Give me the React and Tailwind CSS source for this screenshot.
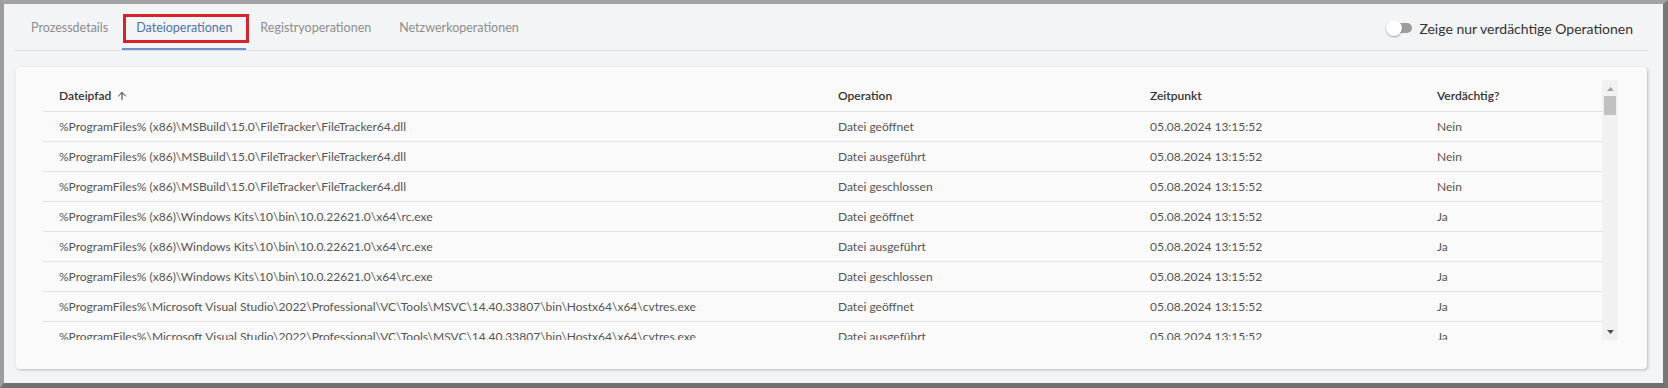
import React from "react";
import { ArrowUp } from "lucide-react";

const tabs = ["Prozessdetails", "Dateioperationen", "Registryoperationen", "Netzwerkoperationen"];

const msbuild = "%ProgramFiles% (x86)\\MSBuild\\15.0\\FileTracker\\FileTracker64.dll";
const rc = "%ProgramFiles% (x86)\\Windows Kits\\10\\bin\\10.0.22621.0\\x64\\rc.exe";
const cvtres =
  "%ProgramFiles%\\Microsoft Visual Studio\\2022\\Professional\\VC\\Tools\\MSVC\\14.40.33807\\bin\\Hostx64\\x64\\cvtres.exe";

const ops = ["Datei geöffnet", "Datei ausgeführt", "Datei geschlossen"];

const rows = [
  ...ops.map((op) => ({ path: msbuild, op, sus: "Nein" })),
  ...ops.map((op) => ({ path: rc, op, sus: "Ja" })),
  ...ops.map((op) => ({ path: cvtres, op, sus: "Ja" })),
];

function Tab({ label, active }) {
  return (
    <div
      className={
        active
          ? "relative flex items-center px-[14px] pt-1 border-b-2 border-[#6f8fca] text-[#4f73aa]"
          : "relative flex items-center px-[14px] pt-1 border-b-2 border-transparent text-[#8d8d8d]"
      }
    >
      {label}
      {active && (
        <div className="absolute top-[10px] left-px -right-[3px] h-[29px] border-[3px] border-[#d9232b]"></div>
      )}
    </div>
  );
}

function Toggle() {
  return (
    <div className="relative w-[26px] h-4">
      <div className="absolute right-0 top-[3px] h-[10px] w-[20px] rounded-full bg-[#9e9e9e]"></div>
      <div className="absolute left-0 top-0 h-4 w-4 rounded-full bg-white shadow-[0_1px_2px_rgba(0,0,0,0.35)]"></div>
    </div>
  );
}

function Scrollbar() {
  return (
    <div className="w-4 bg-[#f1f1f1] flex flex-col items-center">
      <svg width="7" height="4" className="mt-[7px]">
        <path d="M0 4L3.5 0L7 4Z" fill="#a3a3a3" />
      </svg>
      <div className="mt-[5px] w-[12px] h-[19px] bg-[#c1c1c1]"></div>
      <div className="flex-1"></div>
      <svg width="7" height="4" className="mb-[6px]">
        <path d="M0 0L3.5 4L7 0Z" fill="#505050" />
      </svg>
    </div>
  );
}

export default function App() {
  return (
    <div className="h-[388px] w-[1668px] border-t-4 border-l-4 border-r-[5px] border-b-[5px] border-t-[#a2a2a4] border-l-[#9c9c9e] border-r-[#78787b] border-b-[#707073] bg-[#f3f4f6] flex flex-col pl-[11px] pr-[15px] font-['Lato',sans-serif]">
      <div className="flex h-[47px] border-b border-[#dcdde0]">
        <div className="flex ml-[2px] text-[12.5px]">
          {tabs.map((t) => (
            <Tab key={t} label={t} active={t === "Dateioperationen"} />
          ))}
        </div>
        <div className="ml-auto flex items-center gap-[7px] pt-[2px] pr-[15px]">
          <Toggle />
          <span className="text-[14px] text-[#333]">Zeige nur verdächtige Operationen</span>
        </div>
      </div>

      <div className="mt-[16px] mx-px h-[302px] bg-[#fafafa] rounded-[4px] shadow-[1px_1px_3px_rgba(0,0,0,0.25)] pt-[13px] pl-[27px] pr-[29px]">
        <div className="flex h-[260px]">
          <div className="flex-1 overflow-hidden text-[12px]">
            <div className="grid grid-cols-[779px_312px_287px_1fr] h-[32px] items-center border-b border-[#e2e2e2] font-semibold text-[#333]">
              <div className="pl-4 flex items-center gap-[5px]">
                Dateipfad
                <ArrowUp size={12} strokeWidth={2} />
              </div>
              <div className="pl-4">Operation</div>
              <div className="pl-4">Zeitpunkt</div>
              <div className="pl-4">Verdächtig?</div>
            </div>
            {rows.map((r, i) => (
              <div
                key={i}
                className="grid grid-cols-[779px_312px_287px_1fr] h-[30px] items-center border-b border-[#e2e2e2] text-[#555]"
              >
                <div className="pl-4 truncate">{r.path}</div>
                <div className="pl-4">{r.op}</div>
                <div className="pl-4">05.08.2024 13:15:52</div>
                <div className="pl-4">{r.sus}</div>
              </div>
            ))}
          </div>
          <Scrollbar />
        </div>
      </div>
    </div>
  );
}
